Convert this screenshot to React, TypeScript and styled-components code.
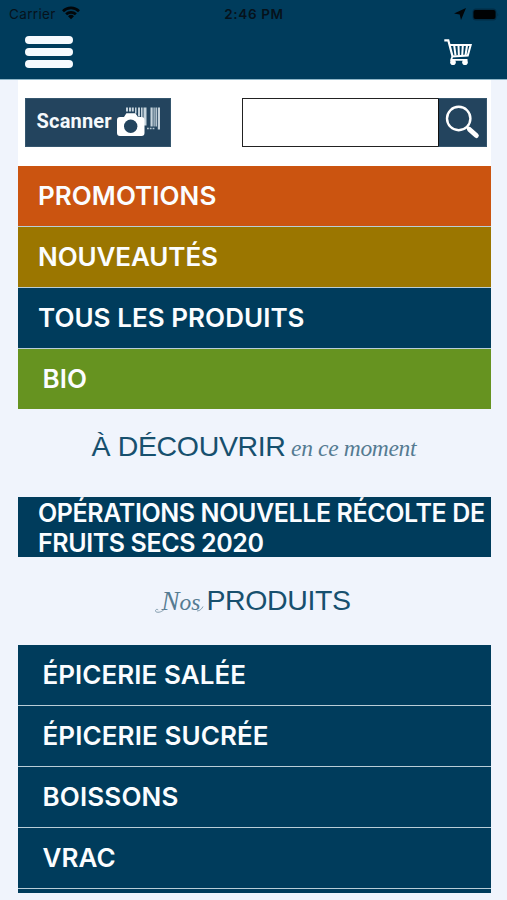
import React from "react";
import styled, { createGlobalStyle } from "styled-components";

const NAVY = "#003c5c";
const SLATE = "#23445e";

const GlobalStyle = createGlobalStyle`
  * { box-sizing: border-box; }
  html, body { margin: 0; padding: 0; background: #f0f4fc; }
  body { font-family: Inter, "Liberation Sans", sans-serif; }
`;

const Screen = styled.div`
  width: 507px;
  height: 900px;
  overflow: hidden;
  background: #f0f4fc;
  display: flex;
  flex-direction: column;
`;

const Header = styled.header`
  height: 80px;
  flex: none;
  background: ${NAVY};
  border-bottom: 1px solid #8fb6c8;
`;

const StatusBar = styled.div`
  height: 28px;
  display: grid;
  grid-template-columns: 1fr auto 1fr;
  align-items: center;
  padding: 0 8px 0 9px;
  font-size: 13.5px;
  line-height: 28px;
  color: #06121b;
`;

const Carrier = styled.div`
  display: flex;
  align-items: center;
  gap: 6px;
  letter-spacing: 0.35px;
  svg { margin-top: -2px; }
`;

const Clock = styled.div`
  font-weight: 600;
  font-size: 13.5px;
  letter-spacing: 0.65px;
`;

const Indicators = styled.div`
  display: flex;
  justify-content: flex-end;
  align-items: center;
  gap: 6px;
`;

const NavBar = styled.div`
  height: 51px;
  display: flex;
  justify-content: space-between;
  padding: 8px 35px 0 25px;
`;

const MenuButton = styled.button`
  width: 48px;
  height: 32px;
  padding: 0;
  border: 0;
  background: none;
  display: flex;
  flex-direction: column;
  justify-content: space-between;
`;

const MenuBar = styled.span`
  width: 48px;
  height: 8px;
  border-radius: 4px;
  background: #f6fafe;
`;

const CartButton = styled.button`
  padding: 3px 0 0;
  border: 0;
  background: none;
  height: 30px;
  line-height: 0;
`;

const Content = styled.main`
  width: 473px;
  margin-left: 18px;
`;

const Tools = styled.div`
  height: 86px;
  background: #fff;
  display: flex;
  justify-content: space-between;
  align-items: flex-start;
  padding: 18px 4px 0 7px;
`;

const ScanButton = styled.button`
  width: 146px;
  height: 49px;
  border: 1px solid #35566e;
  padding: 0 0 0 10.5px;
  background: ${SLATE};
  color: #f5f9fc;
  display: flex;
  font: 700 20px/45px Roboto, sans-serif;
  letter-spacing: 0.2px;
`;

const ScanArt = styled.svg`
  margin: 8px 0 0 5px;
`;

const Search = styled.div`
  width: 245px;
  height: 49px;
  display: flex;
`;

const SearchInput = styled.input`
  width: 196px;
  height: 49px;
  padding: 0 8px;
  border: 1.5px solid #222;
  border-right: 0;
  border-radius: 0;
  background: #fff;
  outline: none;
`;

const SearchButton = styled.button`
  width: 49px;
  height: 49px;
  padding: 0;
  border: 1px solid #35566e;
  border-left: 1px solid #111;
  background: ${SLATE};
  display: flex;
`;

const List = styled.nav`
  display: flex;
  flex-direction: column;
  gap: 1px;
  background: #b9cdd7;
`;

const Row = styled.a<{ $bg?: string; $indent?: number; $track?: number }>`
  height: 60px;
  padding-left: ${(p) => p.$indent ?? 24.5}px;
  background: ${(p) => p.$bg ?? NAVY};
  color: #fbfdff;
  font-weight: 600;
  font-size: 26px;
  line-height: 60px;
  letter-spacing: ${(p) => p.$track ?? 0.05}px;
  white-space: nowrap;
`;

const Banner = styled.a`
  display: block;
  height: 60px;
  padding: 1px 0 0 20px;
  background: ${NAVY};
  color: #fbfdff;
  font-weight: 600;
  font-size: 25px;
  line-height: 30px;
  white-space: nowrap;
`;

const BannerLine = styled.span<{ $track: number }>`
  display: block;
  letter-spacing: ${(p) => p.$track}px;
`;

const Heading = styled.h2<{ $height: number; $left: number; $top: number }>`
  margin: 0;
  height: ${(p) => p.$height}px;
  padding: ${(p) => p.$top}px 0 0 ${(p) => p.$left}px;
  display: flex;
  align-items: baseline;
  font-weight: 400;
  line-height: 36px;
  white-space: nowrap;
`;

const Caps = styled.span<{ $track: number }>`
  font-family: "Liberation Sans", sans-serif;
  font-size: 28.5px;
  color: #17506e;
  letter-spacing: ${(p) => p.$track}px;
`;

const Italic = styled.span<{ $track: number }>`
  font-family: "Liberation Serif", serif;
  font-style: italic;
  font-size: 23.5px;
  color: #557b92;
  letter-spacing: ${(p) => p.$track}px;
`;

const Script = styled(Italic)`
  position: relative;
  width: 52px;
  padding-left: 7px;
  &::first-letter { font-size: 27px; }
`;

const Flourish = styled.svg`
  position: absolute;
  left: 0;
  bottom: 7px;
  overflow: visible;
`;

const Tail = styled.div`
  height: 3.5px;
  background: ${NAVY};
`;

const WifiIcon = () => (
  <svg width="18" height="14" viewBox="0 0 18 14" fill="none" stroke="#020609" strokeWidth="2.7">
    <path d="M1 5.2a11.5 11.5 0 0 1 16 0" />
    <path d="M4.1 8.3a7 7 0 0 1 9.8 0" />
    <path d="M9 13.3L6 10.2a4.3 4.3 0 0 1 6 0z" fill="#020609" stroke="none" />
  </svg>
);

const LocationIcon = () => (
  <svg width="12" height="12" viewBox="0 0 12 12">
    <path d="M12 0L7 12L5.7 6.4L0 5.4Z" fill="#020609" />
  </svg>
);

const BatteryIcon = () => (
  <svg width="27" height="13" viewBox="0 0 27 13">
    <rect x="0.5" y="0.5" width="24" height="12" rx="3.5" fill="#002c45" />
    <rect x="1.5" y="2" width="22" height="9" rx="2" fill="#000203" />
    <path d="M25.5 4.5q1.3 2 0 4z" fill="#002c45" />
  </svg>
);

const CartIcon = () => (
  <svg width="28" height="27" viewBox="0 0 28 27" fill="none" stroke="#fff">
    <path d="M0.3 1.3H4.3L8.5 17.3" strokeWidth="2.2" />
    <path d="M5.2 6H26.7L23.8 16.6L8.3 17.4" strokeWidth="2" />
    <path d="M10.2 6.5L11.5 16.5M14.5 6.5L14.9 16.5M18.8 6.5L18.2 16.5M23 6.5L21.5 16.5" strokeWidth="2" />
    <path d="M8.5 17L7.2 20.8H23.5" strokeWidth="1.8" />
    <circle cx="9" cy="23.3" r="2.8" fill="#fff" stroke="none" />
    <circle cx="21" cy="23.3" r="2.8" fill="#fff" stroke="none" />
  </svg>
);

const bars = [
  [9, 2, 4], [12, 2, 4], [14.8, 2, 4], [18, 1.5, 6], [21, 2, 9], [24, 1.6, 12], [26.5, 3, 18],
  [33.5, 2.2, 19], [36.5, 1.2, 19], [38.5, 1.4, 19], [40.8, 2.2, 22],
];

const ScannerIcon = () => (
  <ScanArt width="45" height="32" viewBox="0 0 45 32">
    {bars.map(([x, w, h]) => (
      <rect key={x} x={x} y="0.5" width={w} height={h} fill="#c5d3dc" />
    ))}
    <path d="M30 21.5H38" stroke="#b5c5cf" strokeWidth="1.5" strokeDasharray="1.8 1" />
    <path
      d="M3 10H7L9.4 6.2H18.4L21 10H24.5Q27.5 10 27.5 13V26Q27.5 29 24.5 29H3Q0 29 0 26V13Q0 10 3 10Z"
      fill="#fff"
    />
    <circle cx="13.7" cy="19.3" r="6.7" fill={SLATE} />
  </ScanArt>
);

const MagnifierIcon = () => (
  <svg width="47" height="47" viewBox="0 0 47 47" fill="none" stroke="#fff">
    <circle cx="19.7" cy="19.5" r="11.7" strokeWidth="2.4" />
    <path d="M28 28L30.5 30.5" strokeWidth="2.5" />
    <path d="M30.5 30.5L37.3 36.5" strokeWidth="5" strokeLinecap="round" />
  </svg>
);

const ScriptFlourish = () => (
  <Flourish width="50" height="22" viewBox="0 0 50 22" fill="none" stroke="#7893a5" strokeWidth="0.9">
    <path d="M9 18.5C6 22 0 22 0.5 19.5C1 18 3 18 3 19.2" />
    <path d="M42 20C45 20 47 17.5 48 15.5" />
  </Flourish>
);

export default function App() {
  return (
    <>
      <GlobalStyle />
      <Screen>
        <Header>
          <StatusBar>
            <Carrier>Carrier<WifiIcon /></Carrier>
            <Clock>2:46 PM</Clock>
            <Indicators><LocationIcon /><BatteryIcon /></Indicators>
          </StatusBar>
          <NavBar>
            <MenuButton aria-label="Menu"><MenuBar /><MenuBar /><MenuBar /></MenuButton>
            <CartButton aria-label="Panier"><CartIcon /></CartButton>
          </NavBar>
        </Header>
        <Content>
          <Tools>
            <ScanButton>Scanner<ScannerIcon /></ScanButton>
            <Search>
              <SearchInput aria-label="Rechercher" />
              <SearchButton aria-label="Rechercher"><MagnifierIcon /></SearchButton>
            </Search>
          </Tools>
          <List>
            <Row $bg="#cb5410" $indent={20}>PROMOTIONS</Row>
            <Row $bg="#9b7600" $indent={20} $track={-0.1}>NOUVEAUTÉS</Row>
            <Row $indent={20}>TOUS LES PRODUITS</Row>
            <Row $bg="#669320">BIO</Row>
          </List>
          <Heading $height={88} $left={73.5} $top={19}>
            <Caps $track={-0.35}>À DÉCOUVRIR</Caps>
            <Italic $track={-0.35}>&nbsp;en ce moment</Italic>
          </Heading>
          <Banner>
            <BannerLine $track={-0.4}>OPÉRATIONS NOUVELLE RÉCOLTE DE</BannerLine>
            <BannerLine $track={-0.4}>FRUITS SECS 2020</BannerLine>
          </Banner>
          <Heading $height={88} $left={136.5} $top={25}>
            <Script $track={0}>Nos<ScriptFlourish /></Script>
            <Caps $track={-0.4}>PRODUITS</Caps>
          </Heading>
          <List>
            <Row>ÉPICERIE SALÉE</Row>
            <Row $track={0.1}>ÉPICERIE SUCRÉE</Row>
            <Row $track={0.15}>BOISSONS</Row>
            <Row>VRAC</Row>
            <Tail />
          </List>
        </Content>
      </Screen>
    </>
  );
}
